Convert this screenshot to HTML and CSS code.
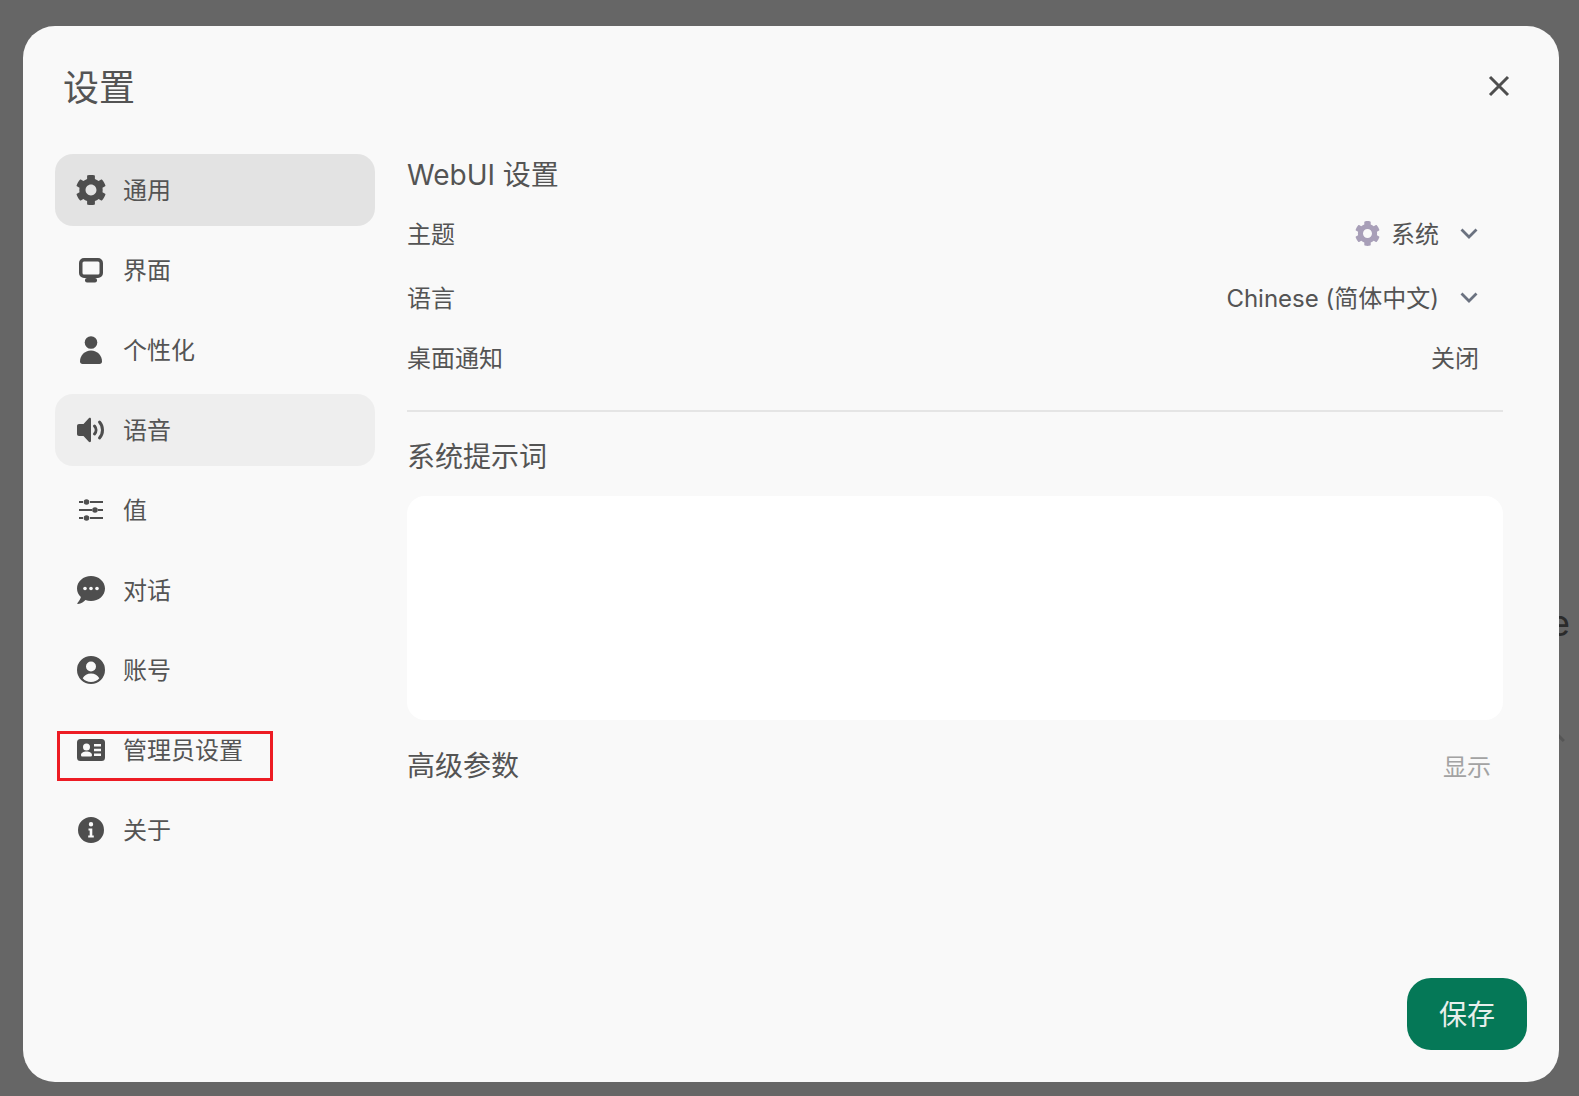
FILE: index.html
```html
<!DOCTYPE html>
<html lang="zh-CN">
<head>
    <meta charset="UTF-8">
    <meta name="viewport" content="width=device-width, initial-scale=1.0">
    <title>设置</title>
    <link rel="stylesheet" href="styles.css">
</head>
<body>
    <div class="behind-text">e</div>
    <div class="behind-caret"></div>
    <div class="modal">
        <header class="modal-header">
            <h1>设置</h1>
            <svg class="close-icon" viewBox="0 0 20 20"><path d="M1 1 19 19M19 1 1 19"/></svg>
        </header>
        <div class="modal-body">
            <nav class="sidebar">
                <div class="tab active">
                    <svg class="tab-icon" viewBox="26 26 460 460"><path d="M487.4 315.7l-42.6-24.6c4.3-23.2 4.3-47 0-70.2l42.6-24.6c4.9-2.8 7.1-8.6 5.5-14-11.1-35.6-30-67.8-54.7-94.6-3.8-4.1-10-5.1-14.8-2.3L380.8 110c-17.9-15.4-38.5-27.3-60.8-35.1V25.8c0-5.6-3.9-10.5-9.4-11.7-36.7-8.2-74.3-7.8-109.2 0-5.5 1.2-9.4 6.1-9.4 11.7V75c-22.2 7.9-42.8 19.8-60.8 35.1L88.7 85.5c-4.9-2.8-11-1.9-14.8 2.3-24.7 26.7-43.6 58.9-54.7 94.6-1.7 5.4.6 11.2 5.5 14L67.3 221c-4.3 23.2-4.3 47 0 70.2l-42.6 24.6c-4.9 2.8-7.1 8.6-5.5 14 11.1 35.6 30 67.8 54.7 94.6 3.8 4.1 10 5.1 14.8 2.3l42.6-24.6c17.9 15.4 38.5 27.3 60.8 35.1v49.2c0 5.6 3.9 10.5 9.4 11.7 36.7 8.2 74.3 7.8 109.2 0 5.5-1.2 9.4-6.1 9.4-11.7v-49.2c22.2-7.9 42.8-19.8 60.8-35.1l42.6 24.6c4.9 2.8 11 1.9 14.8-2.3 24.7-26.7 43.6-58.9 54.7-94.6 1.5-5.5-.7-11.3-5.6-14.1zM256 346c-49.7 0-90-40.300-90-90s40.300-90 90-90 90 40.300 90 90-40.300 90-90 90z"/></svg>
                    <span>通用</span>
                </div>
                <div class="tab">
                    <svg class="tab-icon" viewBox="0 0 28 28"><path fill-rule="evenodd" d="M7 2h14a5 5 0 0 1 5 5v10a5 5 0 0 1-5 5H7a5 5 0 0 1-5-5V7a5 5 0 0 1 5-5zm0 3.500A1.500 1.500 0 0 0 5.500 7v10A1.500 1.500 0 0 0 7 18.500h14a1.500 1.500 0 0 0 1.500-1.500V7A1.500 1.500 0 0 0 21 5.500z"/><rect x="8" y="22" width="12" height="4.500" rx="2"/></svg>
                    <span>界面</span>
                </div>
                <div class="tab">
                    <svg class="tab-icon" viewBox="0 0 28 28"><circle cx="14" cy="6.500" r="6.300"/><path d="M14 14.500c6.500 0 11 5 11 11 0 1.500-1 2.500-2.500 2.500h-17C4 28 3 27 3 25.500c0-6 4.500-11 11-11z"/></svg>
                    <span>个性化</span>
                </div>
                <div class="tab hovered">
                    <svg class="tab-icon" viewBox="0 0 28 28"><path d="M14 3v22c0 1.200-1.300 1.500-2.200.8L6.500 20H2c-1.200 0-2-.8-2-2v-8c0-1.200.8-2 2-2h4.500l5.300-5.800C12.700 1.500 14 1.800 14 3z"/><path class="tab-line" d="M17.500 10c2 2.200 2 5.800 0 8M22.500 6c4 4.500 4 11.500 0 16"/></svg>
                    <span>语音</span>
                </div>
                <div class="tab">
                    <svg class="tab-icon" viewBox="0 0 28 28"><path class="tab-thin" d="M2 6h4M13 6h13M2 14h13M21 14h5M2 22h4M13 22h13"/><circle cx="9.500" cy="6" r="2.800"/><circle cx="18" cy="14" r="2.800"/><circle cx="9.500" cy="22" r="2.800"/></svg>
                    <span>值</span>
                </div>
                <div class="tab">
                    <svg class="tab-icon" viewBox="0 0 28 28"><path d="M14 0c7.700 0 14 5.500 14 12.500S21.700 25 14 25c-2 0-3.900-.4-5.600-1C7 25.400 4.300 28 1 28c-.6 0-.9-.7-.5-1.100 1.600-1.800 2.900-4 3.400-5.900C1.500 18.800 0 15.800 0 12.500 0 5.500 6.300 0 14 0z"/><circle class="tab-dot" cx="8" cy="12.500" r="1.800"/><circle class="tab-dot" cx="14" cy="12.500" r="1.800"/><circle class="tab-dot" cx="20" cy="12.500" r="1.800"/></svg>
                    <span>对话</span>
                </div>
                <div class="tab">
                    <svg class="tab-icon" viewBox="0 0 28 28"><path fill-rule="evenodd" d="M14 0a14 14 0 1 1 0 28 14 14 0 0 1 0-28zm0 5.500a5 5 0 1 0 0 10 5 5 0 0 0 0-10zm0 12c-3.600 0-6.700 1.800-8.300 4.700a11 11 0 0 0 16.600 0c-1.600-2.900-4.700-4.700-8.300-4.700z"/></svg>
                    <span>账号</span>
                </div>
                <div class="tab">
                    <svg class="tab-icon" viewBox="0 0 28 28"><path fill-rule="evenodd" d="M3.500 3h21A3.500 3.500 0 0 1 28 6.500v15a3.500 3.500 0 0 1-3.500 3.500h-21A3.500 3.500 0 0 1 0 21.500v-15A3.500 3.500 0 0 1 3.500 3zm6 4.500a3.500 3.500 0 1 0 0 7 3.500 3.500 0 0 0 0-7zM9.500 15.500c-3 0-5.500 1.500-5.500 3.500 0 1 .7 1.500 1.500 1.500h8c.8 0 1.500-.5 1.500-1.500 0-2-2.500-3.500-5.500-3.500zM17 8v2.500h7V8zm0 4.700v2.500h7v-2.500zm0 4.700v2.500h7v-2.500z"/></svg>
                    <span>管理员设置</span>
                </div>
                <div class="tab">
                    <svg class="tab-icon" viewBox="0 0 28 28"><path fill-rule="evenodd" d="M14 1a13 13 0 1 1 0 26 13 13 0 0 1 0-26zm0 5a2.200 2.200 0 1 0 0 4.400A2.200 2.200 0 0 0 14 6zm-2.500 6.500v2h1.200v5h-1.500v2h5.600v-2h-1.500v-7z"/></svg>
                    <span>关于</span>
                </div>
            </nav>
            <main class="content">
                <h2 class="section-title webui-title">WebUI 设置</h2>
                <div class="row row-theme">
                    <span>主题</span>
                    <div class="row-value">
                        <svg class="theme-icon" viewBox="26 26 460 460"><path d="M487.4 315.7l-42.6-24.6c4.3-23.2 4.3-47 0-70.2l42.6-24.6c4.9-2.8 7.1-8.6 5.5-14-11.1-35.6-30-67.8-54.7-94.6-3.8-4.1-10-5.1-14.8-2.3L380.8 110c-17.9-15.4-38.5-27.3-60.8-35.1V25.8c0-5.6-3.9-10.5-9.4-11.7-36.7-8.2-74.3-7.8-109.2 0-5.5 1.2-9.4 6.1-9.4 11.7V75c-22.2 7.9-42.8 19.8-60.8 35.1L88.7 85.5c-4.9-2.8-11-1.9-14.8 2.3-24.7 26.7-43.6 58.9-54.7 94.6-1.7 5.4.6 11.2 5.5 14L67.3 221c-4.3 23.2-4.3 47 0 70.2l-42.6 24.6c-4.9 2.8-7.1 8.6-5.5 14 11.1 35.6 30 67.8 54.7 94.6 3.8 4.1 10 5.1 14.8 2.3l42.6-24.6c17.9 15.4 38.5 27.3 60.8 35.1v49.2c0 5.6 3.9 10.5 9.4 11.7 36.7 8.2 74.3 7.8 109.2 0 5.5-1.2 9.4-6.1 9.4-11.7v-49.2c22.2-7.9 42.8-19.8 60.8-35.1l42.6 24.6c4.9 2.8 11 1.9 14.8-2.3 24.7-26.7 43.6-58.9 54.7-94.6 1.5-5.5-.7-11.3-5.6-14.1zM256 346c-49.7 0-90-40.300-90-90s40.300-90 90-90 90 40.300 90 90-40.300 90-90 90z"/></svg>
                        <span>系统</span>
                        <svg class="chevron" viewBox="0 0 18 11"><path d="M1.500 1.500 9 9l7.500-7.500"/></svg>
                    </div>
                </div>
                <div class="row row-lang">
                    <span>语言</span>
                    <div class="row-value">
                        <span>Chinese (简体中文)</span>
                        <svg class="chevron" viewBox="0 0 18 11"><path d="M1.500 1.500 9 9l7.500-7.500"/></svg>
                    </div>
                </div>
                <div class="row row-notify">
                    <span>桌面通知</span>
                    <span class="row-plain">关闭</span>
                </div>
                <hr class="divider">
                <h2 class="section-title prompt-title">系统提示词</h2>
                <div class="prompt-box"></div>
                <div class="advanced">
                    <h2 class="section-title advanced-title">高级参数</h2>
                    <span class="advanced-toggle">显示</span>
                </div>
            </main>
        </div>
        <footer class="modal-footer">
            <button class="save-btn" type="button">保存</button>
        </footer>
        <div class="highlight"></div>
    </div>
</body>
</html>
```

FILE: styles.css
```css
* {
    box-sizing: border-box;
}

body {
    display: flex;
    height: 100vh;
    margin: 0;
    padding: 26px 20px 14px 23px;
    background: #666666;
    font-family: Inter, "Noto Sans CJK SC", sans-serif;
    font-size: 24px;
    color: #545454;
    overflow: hidden;
}

.behind-text {
    position: absolute;
    top: 601px;
    left: 1549px;
    font-size: 36px;
    line-height: 44px;
    color: #2b2b2b;
}

.behind-caret {
    position: absolute;
    top: 733px;
    left: 1548px;
    width: 14px;
    height: 14px;
    border-top: 3px solid #565656;
    border-right: 3px solid #565656;
    transform: rotate(-45deg);
}

.modal {
    position: relative;
    display: flex;
    flex-direction: column;
    flex: 1;
    background: #f9f9f9;
    border-radius: 32px;
}

.modal-header {
    display: flex;
    justify-content: space-between;
    align-items: center;
    height: 128px;
    padding: 0 50px 8px 40px;
}

.modal-header h1 {
    margin: 0;
    padding-bottom: 2px;
    font-size: 36px;
    font-weight: 400;
}

.close-icon {
    width: 20px;
    height: 20px;
    overflow: visible;
    fill: none;
    stroke: #4e4e4e;
    stroke-width: 3;
}

.modal-body {
    display: flex;
    flex: 1;
    padding: 0 56px 0 32px;
}

.sidebar {
    display: flex;
    flex-direction: column;
    gap: 8px;
    width: 320px;
}

.tab {
    display: flex;
    align-items: center;
    gap: 18px;
    height: 72px;
    padding: 0 22px;
    border-radius: 18px;
}

.tab span {
    padding-bottom: 4px;
}

.tab.active {
    background: #e3e3e3;
}

.tab.hovered {
    background: #eeeeee;
}

.tab-icon {
    flex: none;
    width: 28px;
    height: 28px;
    overflow: visible;
    fill: #4e4e4e;
}

.tab-line {
    fill: none;
    stroke: #4e4e4e;
    stroke-width: 3;
    stroke-linecap: round;
}

.tab-thin {
    fill: none;
    stroke: #4e4e4e;
    stroke-width: 1.800;
}

.tab-dot {
    fill: #f9f9f9;
}

.content {
    flex: 1;
    margin-left: 32px;
}

.section-title {
    margin: 0;
    font-size: 28px;
    font-weight: 400;
    line-height: 38px;
}

.webui-title {
    margin-top: 2px;
}

.row {
    display: flex;
    justify-content: space-between;
    align-items: center;
    height: 36px;
}

.row span {
    padding-bottom: 2px;
}

.row-theme {
    margin-top: 21px;
}

.row-lang {
    margin-top: 28px;
}

.row-notify {
    margin-top: 24px;
}

.row-value {
    display: flex;
    align-items: center;
    padding-right: 25px;
}

.row-plain {
    padding-right: 24px;
}

.theme-icon {
    width: 23px;
    height: 23px;
    margin-right: 12px;
    overflow: visible;
    fill: #a89fb8;
}

.chevron {
    width: 18px;
    height: 11px;
    margin-left: 21px;
    fill: none;
    stroke: #6b7280;
    stroke-width: 2.800;
}

.divider {
    height: 2px;
    margin: 35px 0 0;
    border: none;
    background: #e5e5e5;
}

.prompt-title {
    margin-top: 26px;
}

.prompt-box {
    height: 224px;
    margin-top: 20px;
    background: #ffffff;
    border-radius: 18px;
}

.advanced {
    display: flex;
    justify-content: space-between;
    align-items: center;
    margin-top: 27px;
}

.advanced-title {
    padding-bottom: 2px;
}

.advanced-toggle {
    padding: 0 12px 4px 0;
    color: #a3a3a3;
}

.modal-footer {
    display: flex;
    justify-content: flex-end;
    padding: 0 32px 32px 0;
}

.save-btn {
    width: 120px;
    height: 72px;
    padding: 0 0 2px;
    border: none;
    border-radius: 24px;
    background: #057857;
    font-family: inherit;
    font-size: 28px;
    color: #e8efec;
}

.highlight {
    position: absolute;
    top: 705px;
    left: 34px;
    width: 216px;
    height: 50px;
    border: 3px solid #ed1c24;
}
```
